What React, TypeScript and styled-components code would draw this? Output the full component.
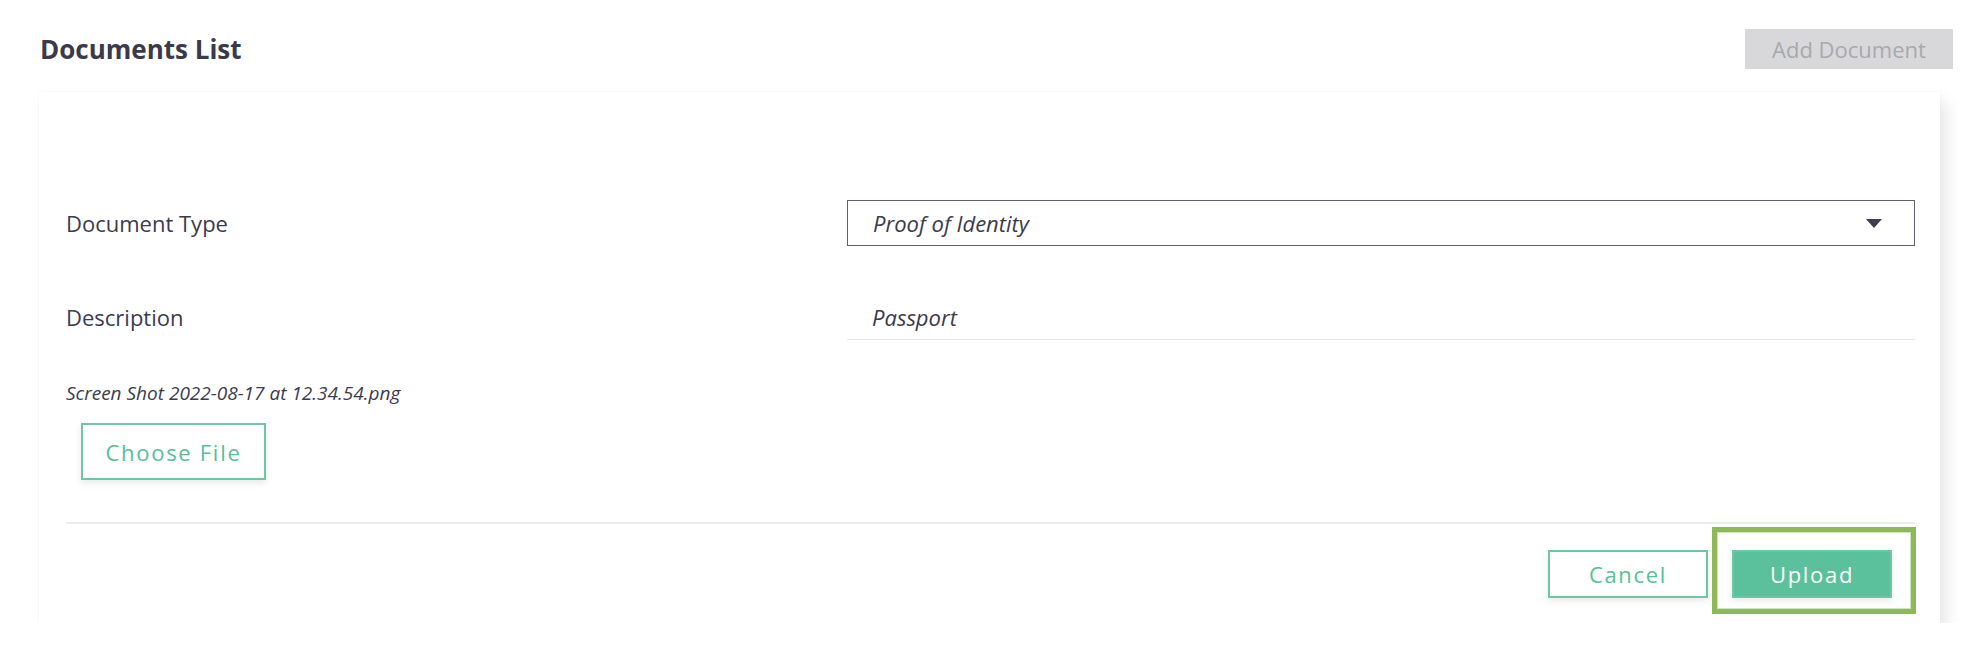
import React from 'react'
import styled, { createGlobalStyle } from 'styled-components'

const GlobalStyle = createGlobalStyle`
  body {
    margin: 0;
    background: #ffffff;
    font-family: 'Open Sans', 'Noto Sans', Arial, sans-serif;
    color: #3b3b4d;
  }
`

const Page = styled.div`
  padding: 29px 17px 0 39px;
`

const Header = styled.div`
  display: flex;
  justify-content: space-between;
  align-items: center;
  padding-left: 1px;
`

const Title = styled.h1`
  margin: 0;
  font-size: 26px;
  line-height: 1;
  font-weight: 700;
  color: #3a3a4b;
`

const AddButton = styled.button`
  height: 40px;
  width: 208px;
  border: none;
  background: #d8d8db;
  color: #a8a8ad;
  font-family: inherit;
  font-size: 22px;
  padding: 0;
  cursor: not-allowed;
`

const Card = styled.div`
  margin: 23px 13px 0 0;
  padding: 108px 25px 9px 27px;
  background: #fff;
  box-shadow: 0 0 2px rgba(0, 0, 0, 0.05), 7px 9px 14px rgba(0, 0, 0, 0.09);
`

const Form = styled.div`
  display: grid;
  grid-template-columns: 781px 1fr;
  row-gap: 48px;
`

const Label = styled.div<{ $top?: number }>`
  font-size: 22px;
  line-height: 30px;
  align-self: ${({ $top }) => ($top !== undefined ? 'start' : 'center')};
  padding-top: ${({ $top }) => $top || 0}px;
`

const Select = styled.div`
  height: 46px;
  box-sizing: border-box;
  border: 1px solid #5f5f6f;
  display: flex;
  align-items: center;
  justify-content: space-between;
  padding: 0 32px 0 25px;
  font-size: 22px;
  font-style: italic;
`

const TextValue = styled.div`
  padding: 8px 25px 7px;
  font-size: 22px;
  line-height: 30px;
  font-style: italic;
  border-bottom: 1px solid #e6e6e6;
`

const FileName = styled.div`
  margin-top: 40px;
  font-size: 19px;
  line-height: 26px;
  font-style: italic;
`

const Button = styled.button<{ $filled?: boolean }>`
  box-sizing: border-box;
  font-family: inherit;
  font-size: 22px;
  letter-spacing: 1.7px;
  border: 2px solid #6cc7a5;
  background: ${({ $filled }) => ($filled ? '#5ac19c' : '#fff')};
  color: ${({ $filled }) => ($filled ? '#fff' : '#57be98')};
  box-shadow: 0 3px 7px rgba(0, 0, 0, 0.09);
  padding: 0;
  cursor: pointer;
`

const ChooseButton = styled(Button)`
  display: block;
  margin: 17px 0 0 15px;
  width: 185px;
  height: 57px;
`

const ActionButton = styled(Button)`
  width: 160px;
  height: 48px;
`

const Divider = styled.div`
  margin-top: 42px;
  height: 2px;
  background: #ececec;
`

const Footer = styled.div`
  display: flex;
  justify-content: flex-end;
  align-items: center;
  gap: 4px;
  margin: 3px -1px 0 0;
`

const CancelButton = styled(ActionButton)`
  margin-top: 7px;
`

const Highlight = styled.div`
  border: 5px solid #8bba57;
  box-shadow: inset 0 0 0 1px #d3e5bf;
  padding: 18px 19px 11px 15px;
`

const Arrow = () => (
  <svg width="16" height="9" viewBox="0 0 16 9">
    <polygon points="0,0 16,0 8,9" fill="#3d3d50" />
  </svg>
)

const App = () => {
  return (
    <Page>
      <GlobalStyle />
      <Header>
        <Title>Documents List</Title>
        <AddButton disabled>Add Document</AddButton>
      </Header>
      <Card>
        <Form>
          <Label>Document Type</Label>
          <Select>
            <span>Proof of Identity</span>
            <Arrow />
          </Select>
          <Label $top={8}>Description</Label>
          <TextValue>Passport</TextValue>
        </Form>
        <FileName>Screen Shot 2022-08-17 at 12.34.54.png</FileName>
        <ChooseButton>Choose File</ChooseButton>
        <Divider />
        <Footer>
          <CancelButton>Cancel</CancelButton>
          <Highlight>
            <ActionButton $filled>Upload</ActionButton>
          </Highlight>
        </Footer>
      </Card>
    </Page>
  )
}

export default App
